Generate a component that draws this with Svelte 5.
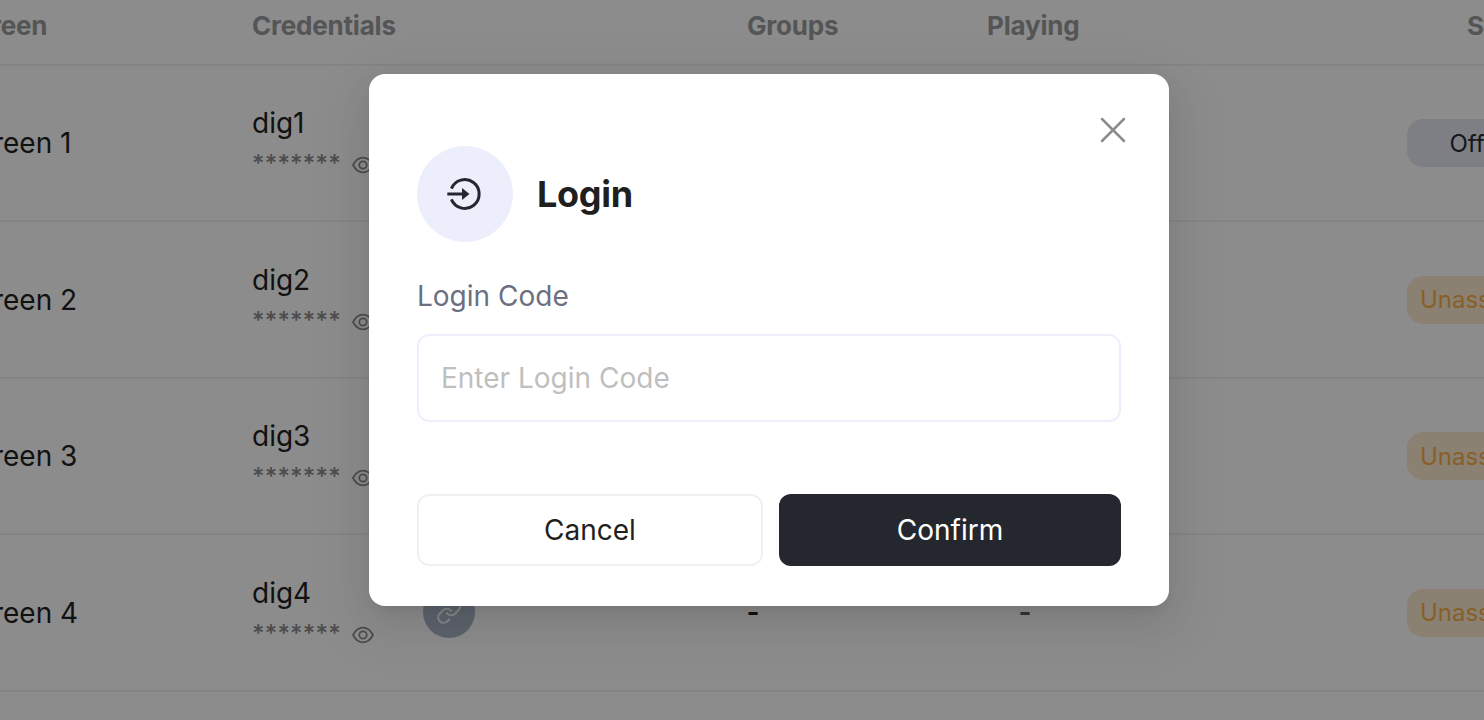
<script>
  const rows = [
    { name: 'Screen 1', user: 'dig1', status: 'Offline', kind: 'offline' },
    { name: 'Screen 2', user: 'dig2', status: 'Unassigned', kind: 'unassigned' },
    { name: 'Screen 3', user: 'dig3', status: 'Unassigned', kind: 'unassigned' },
    { name: 'Screen 4', user: 'dig4', status: 'Unassigned', kind: 'unassigned' }
  ];
</script>

<div class="page">
  <div class="table">
    <div class="row head">
      <div class="name">Screen</div>
      <div>Credentials</div>
      <div></div>
      <div>Groups</div>
      <div>Playing</div>
      <div class="status-head">Status</div>
    </div>
    {#each rows as row}
      <div class="row">
        <div class="name">{row.name}</div>
        <div class="cred">
          <span class="user">{row.user}</span>
          <span class="secret">
            <span class="stars">*******</span>
            <svg class="eye" viewBox="0 0 22 18" width="22" height="18">
              <path d="M1 9C3.6 4 7 1.7 11 1.7S18.400 4 21 9c-2.600 5-6 7.300-10 7.300S3.600 14 1 9Z" />
              <circle cx="11" cy="9" r="3.700" />
            </svg>
          </span>
        </div>
        <div class="link">
          <span class="link-dot">
            <svg viewBox="0 0 24 24" width="26" height="26">
              <path d="M10 13a5 5 0 0 0 7.540.540l3-3a5 5 0 0 0-7.070-7.070l-1.720 1.710" />
              <path d="M14 11a5 5 0 0 0-7.540-.540l-3 3a5 5 0 0 0 7.070 7.070l1.710-1.710" />
            </svg>
          </span>
        </div>
        <div class="dash">-</div>
        <div class="dash play">-</div>
        <div class="status"><span class="pill {row.kind}">{row.status}</span></div>
      </div>
    {/each}
  </div>

  <div class="mask">
    <div class="modal" role="dialog" aria-labelledby="title">
      <button class="close" aria-label="Close">
        <svg viewBox="0 0 26 26" width="26" height="26"><path d="M2 2 24 24M24 2 2 24" /></svg>
      </button>
      <div class="title-row">
        <span class="badge">
          <svg viewBox="0 0 36 36" width="36" height="36">
            <path class="ring" d="M4.400 12.600A14.400 14.400 0 1 1 4.400 23.400" />
            <path class="ring" d="M.3 18H17" />
            <path class="tip" d="M15 12 22.500 18 15 24Z" />
          </svg>
        </span>
        <h1 id="title">Login</h1>
      </div>
      <label for="code">Login Code</label>
      <input id="code" type="text" placeholder="Enter Login Code" />
      <div class="actions">
        <button class="btn cancel">Cancel</button>
        <button class="btn confirm">Confirm</button>
      </div>
    </div>
  </div>
</div>

<style>
  :global(body) {
    margin: 0;
    overflow: hidden;
  }
  .page,
  .page * {
    box-sizing: border-box;
  }
  .page {
    display: grid;
    grid-template-columns: 1484px;
    grid-template-rows: 720px;
    width: 1484px;
    height: 720px;
    overflow: hidden;
    background: #fff;
    font-family: Inter, sans-serif;
    font-size: 28px;
    color: #1f1f1f;
  }
  .table,
  .mask {
    grid-area: 1 / 1;
  }
  .table {
    width: 1700px;
    margin-left: -41px;
    overflow: hidden;
  }
  .row {
    display: grid;
    grid-template-columns: 293px 171px 324px 240px 420px 1fr;
    align-items: center;
    height: 156.500px;
    border-bottom: 2px solid #f0f0f0;
  }
  .head {
    height: 65.600px;
    padding-bottom: 13px;
    font-size: 26px;
    font-weight: 700;
    letter-spacing: -0.200px;
    color: #999b9d;
  }
  .status-head {
    padding-left: 60px;
  }
  .name,
  .status {
    padding-top: 0.600px;
  }
  .head .name {
    padding: 0;
  }
  .cred {
    display: flex;
    flex-direction: column;
    gap: 2px;
    padding-bottom: 1.200px;
  }
  .user {
    line-height: 44px;
  }
  .secret {
    display: flex;
    align-items: center;
    gap: 11px;
    height: 36px;
    color: #8c8c8c;
  }
  .stars {
    padding-bottom: 3px;
    font-size: 24px;
    font-weight: 500;
    letter-spacing: 0.200px;
  }
  .eye {
    fill: none;
    stroke: #8c8c8c;
    stroke-width: 1.800;
  }
  .link-dot {
    display: flex;
    align-items: center;
    justify-content: center;
    width: 52px;
    height: 52px;
    border-radius: 50%;
    background: #a9b4c6;
  }
  .link-dot svg {
    fill: none;
    stroke: #f4f4f4;
    stroke-width: 2;
    stroke-linecap: round;
  }
  .dash {
    font-weight: 600;
    margin-left: -0.500px;
  }
  .play {
    padding-left: 32px;
    color: #5b6364;
  }
  .pill {
    display: flex;
    align-items: center;
    justify-content: center;
    width: 160px;
    height: 48px;
    border-radius: 16px;
    font-size: 24px;
  }
  .offline {
    background: #e6e8f2;
    color: #252830;
  }
  .unassigned {
    background: #fbecd0;
    color: #f8ad4b;
  }
  .mask {
    display: flex;
    justify-content: center;
    align-items: flex-start;
    padding: 74px 0 0 54px;
    background: rgba(0, 0, 0, 0.45);
    z-index: 1;
  }
  .modal {
    position: relative;
    display: flex;
    flex-direction: column;
    width: 800px;
    height: 532px;
    padding: 72px 48px 40px;
    border-radius: 16px;
    background: #fff;
    box-shadow:
      0 12px 32px 0 rgba(0, 0, 0, 0.08),
      0 6px 12px -8px rgba(0, 0, 0, 0.12),
      0 18px 56px 16px rgba(0, 0, 0, 0.05);
  }
  .close {
    position: absolute;
    top: 43px;
    right: 43px;
    width: 26px;
    height: 26px;
    padding: 0;
    border: 0;
    background: none;
  }
  .close svg {
    display: block;
    fill: none;
    stroke: #8c8c8c;
    stroke-width: 2.500;
    stroke-linecap: round;
  }
  .title-row {
    display: flex;
    align-items: center;
    gap: 24px;
    height: 96px;
  }
  .badge {
    display: flex;
    align-items: center;
    justify-content: center;
    width: 96px;
    height: 96px;
    border-radius: 50%;
    background: #edeefc;
  }
  .ring {
    fill: none;
    stroke: #25272f;
    stroke-width: 3;
  }
  .tip {
    fill: #25272f;
  }
  h1 {
    margin: 0;
    font-size: 36px;
    font-weight: 700;
    letter-spacing: -0.300px;
  }
  label {
    margin-top: 32px;
    line-height: 44px;
    color: #6b7080;
  }
  input {
    height: 88px;
    margin-top: 16px;
    padding: 0 22px;
    border: 2px solid #edeffd;
    border-radius: 12px;
    font: inherit;
    background: #fff;
  }
  input::placeholder {
    color: #bfbfbf;
  }
  .actions {
    display: grid;
    grid-template-columns: 346px 342px;
    gap: 16px;
    margin-top: 72px;
  }
  .btn {
    height: 72px;
    border: 0;
    border-radius: 12px;
    font: inherit;
  }
  .cancel {
    border: 2px solid #f0f0f0;
    background: #fff;
    color: #1f1f1f;
  }
  .confirm {
    background: #25272f;
    color: #fff;
  }
</style>
